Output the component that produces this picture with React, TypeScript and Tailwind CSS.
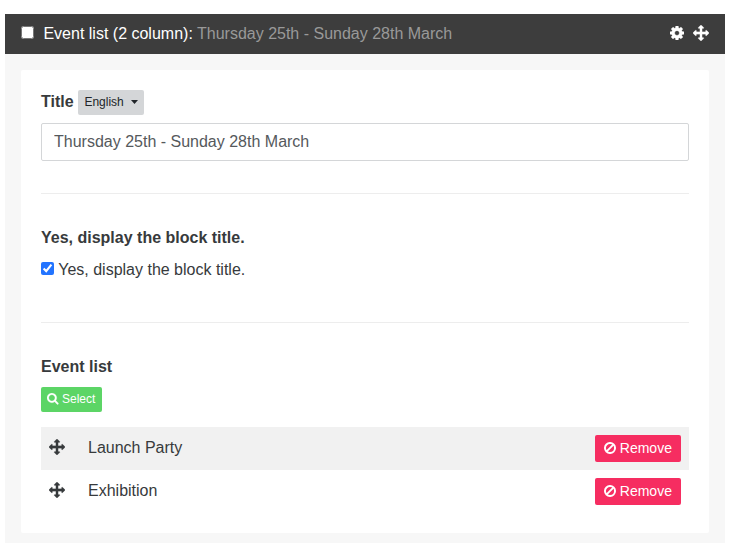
import React from 'react';

type IconProps = { className?: string };

const ARROWS =
  'M1792 896q0 26-19 45l-256 256q-19 19-45 19t-45-19-19-45v-128h-384v384h128q26 0 45 19t19 45-19 45l-256 256q-19 19-45 19t-45-19l-256-256q-19-19-19-45t19-45 45-19h128v-384h-384v128q0 26-19 45t-45 19-45-19l-256-256q-19-19-19-45t19-45l256-256q19-19 45-19t45 19 19 45v128h384v-384h-128q-26 0-45-19t-19-45 19-45l256-256q19-19 45-19t45 19l256 256q19 19 19 45t-19 45-45 19h-128v384h384v-128q0-26 19-45t45-19 45 19l256 256q19 19 19 45z';
const COG =
  'M1152 896q0-106-75-181t-181-75-181 75-75 181 75 181 181 75 181-75 75-181zm512-109v222q0 12-8 23t-20 13l-185 28q-19 54-39 91 35 50 107 138 10 12 10 25t-9 23q-27 37-99 108t-94 71q-12 0-26-9l-138-108q-44 23-91 38-16 136-29 186-7 28-36 28h-222q-14 0-24.5-8.5t-11.5-21.5l-28-184q-49-16-90-37l-141 107q-10 9-25 9-14 0-25-11-126-114-165-168-7-10-7-23 0-12 8-23 15-21 51-66.5t54-70.5q-27-50-41-99l-183-27q-13-2-21-12.5t-8-23.5v-222q0-12 8-23t19-13l186-28q14-46 39-92-40-57-107-138-10-12-10-24 0-10 9-23 26-36 98.5-107.5t94.5-71.5q13 0 26 10l138 107q44-23 91-38 16-136 29-186 7-28 36-28h222q14 0 24.5 8.5t11.5 21.5l28 184q49 16 90 37l142-107q9-9 24-9 13 0 25 10 129 119 165 170 7 8 7 22 0 12-8 23-15 21-51 66.5t-54 70.5q26 50 41 98l183 28q13 2 21 12.5t8 23.5z';
const SEARCH =
  'M1216 832q0-185-131.5-316.5t-316.5-131.5-316.5 131.5-131.5 316.5 131.5 316.5 316.5 131.5 316.5-131.5 131.5-316.5zm512 832q0 52-38 90t-90 38q-54 0-90-38l-343-342q-179 124-399 124-143 0-273.5-55.5t-225-150-150-225-55.5-273.5 55.5-273.5 150-225 225-150 273.5-55.5 273.5 55.5 225 150 150 225 55.5 273.5q0 220-124 399l343 343q37 37 37 90z';

function Arrows({ className }: IconProps) {
  return (
    <svg viewBox="0 0 1792 1792" fill="currentColor" stroke="currentColor" strokeWidth="20" className={className}>
      <path d={ARROWS} />
    </svg>
  );
}

function Cog({ className }: IconProps) {
  return (
    <svg viewBox="128 128 1536 1536" fill="currentColor" stroke="currentColor" strokeWidth="40" className={className}>
      <path d={COG} />
    </svg>
  );
}

function Search({ className }: IconProps) {
  return (
    <svg viewBox="64 128 1664 1664" fill="currentColor" stroke="currentColor" strokeWidth="30" className={className}>
      <path d={SEARCH} />
    </svg>
  );
}

function Ban({ className }: IconProps) {
  return (
    <svg viewBox="0 0 12 12" fill="none" stroke="currentColor" strokeWidth="1.95" className={className}>
      <circle cx="6" cy="6" r="5.03" />
      <path d="M2.4 9.6 9.6 2.4" />
    </svg>
  );
}

function EventRow({ name, striped }: { name: string; striped?: boolean }) {
  return (
    <li className={striped ? 'flex h-[43px] items-center bg-[#f1f1f1] px-2' : 'flex h-[43px] items-center px-2'}>
      <Arrows className="-mt-[3px] size-4" />
      <span className="-mt-[2px] ml-[23px] flex-1">{name}</span>
      <button className="flex h-[27px] w-[86px] items-center rounded-[2px] bg-[#f62d61] pl-[9px] text-sm leading-[21px] text-white">
        <Ban className="-mt-[1px] mr-[3.8px] size-3" />
        Remove
      </button>
    </li>
  );
}

export default function App() {
  return (
    <div className="h-[543px] overflow-hidden bg-white pt-[14px] pr-[13px] pl-[5px] font-['Liberation_Sans',Arial,sans-serif] text-base leading-6 text-[#373a3c]">
      <header className="flex h-10 items-center bg-[#3d3d3d] px-4 text-white">
        <input type="checkbox" className="-mt-[3px] mr-[9.45px] ml-0 size-[13px]" />
        <span className="-mt-px flex-1">
          Event list (2 column): <span className="text-[#999999]">Thursday 25th - Sunday 28th March</span>
        </span>
        <Cog className="-mt-[2px] mr-[9.5px] size-[14px]" />
        <Arrows className="-mt-[2px] size-4" />
      </header>
      <main className="h-[489px] bg-[#f7f7f7] p-4">
        <div className="h-[463px] rounded-[2px] bg-white p-5">
          <div className="flex h-[25px] items-start">
            <label className="w-[37px] font-bold">Title</label>
            <button className="flex h-[25px] w-[66px] items-center rounded-[2px] bg-[#d4d6d8] pb-px pl-[6.4px] text-xs leading-[18px] text-[#212529]">
              English
              <svg viewBox="0 0 7 4" fill="currentColor" className="ml-[7px] h-1 w-[7px]">
                <path d="M0 0h7L3.5 4z" />
              </svg>
            </button>
          </div>
          <input
            type="text"
            defaultValue="Thursday 25th - Sunday 28th March"
            className="mt-2 block h-[38px] w-full rounded-[2px] border border-[#d4d6d8] px-3 pt-px pb-[2px] text-[#55595c]"
          />
          <hr className="mt-8 border-[#ededed]" />
          <div className="mt-8 font-bold">Yes, display the block title.</div>
          <label className="mt-2 flex h-6 items-center">
            <input type="checkbox" defaultChecked className="-mt-[3px] mr-[4.2px] ml-0 size-[13px] accent-[#2374ff]" />
            Yes, display the block title.
          </label>
          <hr className="mt-10 border-[#ededed]" />
          <div className="mt-8 font-bold">Event list</div>
          <button className="mt-2 flex h-[25px] w-[61px] items-center rounded-[2px] bg-[#5cd566] pb-px pl-[6px] text-xs leading-[18px] text-white">
            <Search className="mr-[3.5px] size-[11.5px]" />
            Select
          </button>
          <ul className="mt-[15px]">
            <EventRow name="Launch Party" striped />
            <EventRow name="Exhibition" />
          </ul>
        </div>
      </main>
    </div>
  );
}
